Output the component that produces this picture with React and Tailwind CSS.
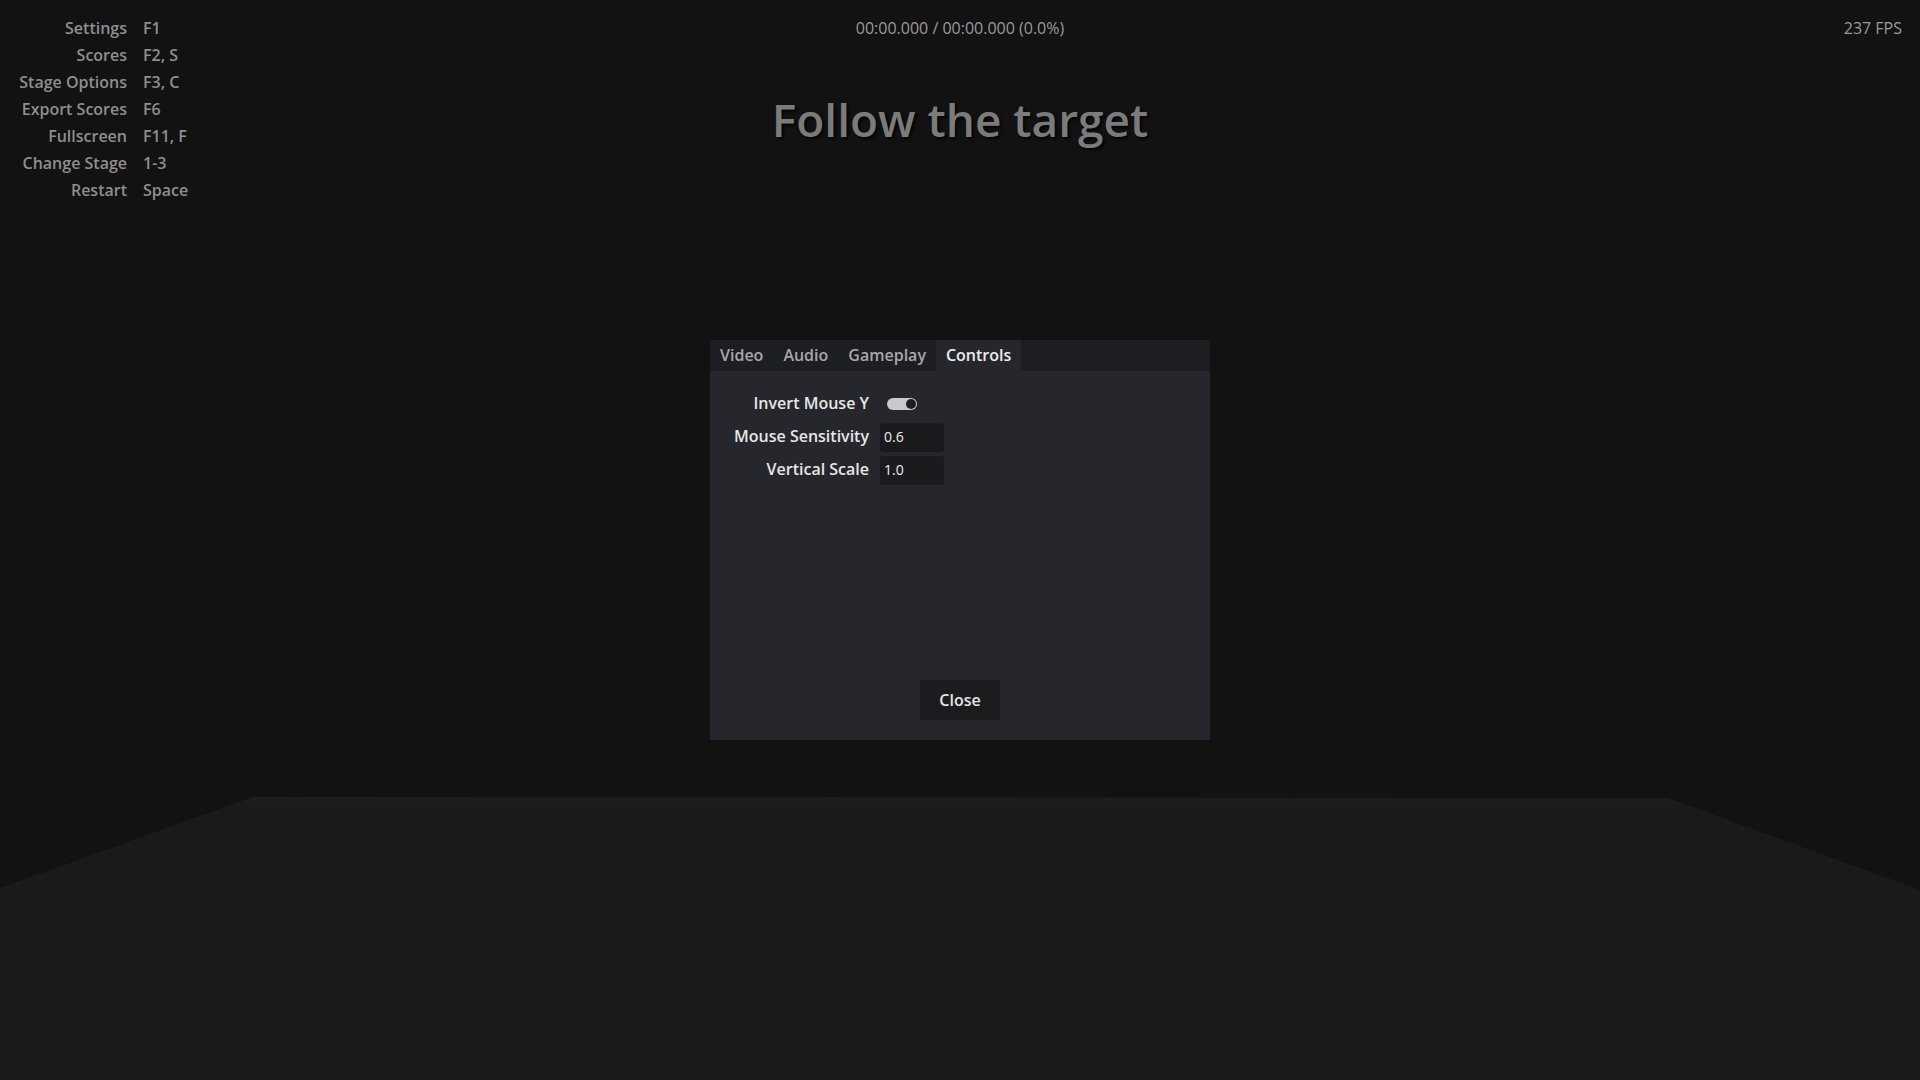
import React, { useState } from "react";

const hotkeys = [
  ["Settings", "F1"],
  ["Scores", "F2, S"],
  ["Stage Options", "F3, C"],
  ["Export Scores", "F6"],
  ["Fullscreen", "F11, F"],
  ["Change Stage", "1-3"],
  ["Restart", "Space"],
];

const tabs = ["Video", "Audio", "Gameplay", "Controls"];

const Floor = () => (
  <svg className="absolute inset-0 w-full h-full" viewBox="0 0 1920 1080" preserveAspectRatio="none">
    <defs>
      <linearGradient id="floorFade" x1="0" y1="0" x2="0" y2="1">
        <stop offset="0" stopColor="#1d1d1d" />
        <stop offset="0.04" stopColor="#1a1a1a" />
        <stop offset="1" stopColor="#1a1a1a" />
      </linearGradient>
    </defs>
    <polygon points="0,888 253,797 1668,798 1920,890 1920,1080 0,1080" fill="url(#floorFade)" />
  </svg>
);

const SettingsPanel = () => {
  const [tab, setTab] = useState("Controls");
  const [invert, setInvert] = useState(true);

  return (
    <div className="w-[500px] h-[400px] bg-[#26272c] flex flex-col">
      {/* Tab bar */}
      <div className="flex h-[31px] bg-[#1d1e22]">
        {tabs.map((t) => (
          <button
            key={t}
            onClick={() => setTab(t)}
            className={`px-[10px] text-[16px] leading-[31px] ${
              tab === t ? "bg-[#26272c] text-[#ececec]" : "text-[#a8a8a8]"
            }`}
          >
            {t}
          </button>
        ))}
      </div>

      {/* Controls */}
      <div className="flex-1 pt-[19px]">
        <div className="grid grid-cols-[159px_auto] gap-x-[11px] gap-y-[6px] items-center text-[16px] text-[#e6e6e6]">
          <span className="text-right leading-[27px]">Invert Mouse Y</span>
          <div className="h-[27px] flex items-center pl-[7px]">
            <button
              onClick={() => setInvert(!invert)}
              className={`w-[30px] h-[12px] rounded-full bg-[#c9c9c9] flex items-center px-[1px] ${
                invert ? "justify-end" : "justify-start"
              }`}
            >
              <span className="w-[10px] h-[10px] rounded-full bg-[#1e1e20]" />
            </button>
          </div>

          <span className="text-right leading-[27px]">Mouse Sensitivity</span>
          <input
            defaultValue="0.6"
            className="w-[64px] h-[27px] px-[4px] bg-[#1b1b1d] rounded-[3px] text-[14px] font-medium text-[#ececec] shadow-[0_2px_0_rgba(0,0,0,0.35)] outline-none"
          />

          <span className="text-right leading-[27px]">Vertical Scale</span>
          <input
            defaultValue="1.0"
            className="w-[64px] h-[27px] px-[4px] bg-[#1b1b1d] rounded-[3px] text-[14px] font-medium text-[#ececec] shadow-[0_2px_0_rgba(0,0,0,0.35)] outline-none"
          />
        </div>
      </div>

      <button className="mx-auto mb-[20px] w-[80px] h-[40px] bg-[#1c1c1e] text-[16px] text-[#e6e6e6]">
        Close
      </button>
    </div>
  );
};

export default function App() {
  return (
    <div className="relative w-full h-[1080px] overflow-hidden bg-[#121212] font-['Open_Sans','Noto_Sans',sans-serif] font-semibold">
      <Floor />

      <div className="relative flex">
        {/* Hotkeys */}
        <div className="w-[400px] pt-[15px]">
          <div className="grid grid-cols-[127px_auto] gap-x-[16px] text-[16px] leading-[27px] text-[#8e8e8e]">
            {hotkeys.map(([label, key]) => (
              <React.Fragment key={label}>
                <span className="text-right">{label}</span>
                <span>{key}</span>
              </React.Fragment>
            ))}
          </div>
        </div>

        {/* Center */}
        <div className="flex-1 flex flex-col items-center pt-[15px]">
          <div className="text-[16px] leading-[27px] font-medium text-[#9a9a9a]">00:00.000 / 00:00.000 (0.0%)</div>
          <h1 className="mt-[49px] text-[46px] leading-[56px] font-semibold text-[#7b7b7b] [text-shadow:2px_2px_3px_rgba(0,0,0,0.85)]">
            Follow the target
          </h1>
          <div className="mt-[193px]">
            <SettingsPanel />
          </div>
        </div>

        {/* FPS */}
        <div className="w-[400px] pt-[15px] pr-[18px] text-right text-[16px] leading-[27px] font-medium text-[#9a9a9a]">
          237 FPS
        </div>
      </div>
    </div>
  );
}
